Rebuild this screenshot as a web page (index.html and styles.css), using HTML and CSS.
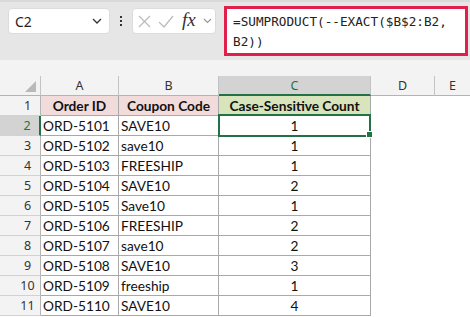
FILE: index.html
```html
<!DOCTYPE html>
<html lang="en">
<head>
  <meta charset="UTF-8">
  <title>Case-Sensitive Count</title>
  <link rel="stylesheet" href="styles.css">
</head>
<body>
  <div class="toolbar">
    <div class="namebox">
      <span class="name">C2</span>
      <svg class="chev" width="10" height="6" viewBox="0 0 10 6"><path d="M1 1 L5 5 L9 1" fill="none" stroke="#333" stroke-width="1.3"/></svg>
    </div>
    <div class="dots"><i></i><i></i><i></i></div>
    <div class="fxbox">
      <svg width="13" height="13" viewBox="0 0 13 13"><path d="M1 1 L12 12 M12 1 L1 12" fill="none" stroke="#bcbcbc" stroke-width="1.3"/></svg>
      <svg class="check" width="16" height="13" viewBox="0 0 16 13"><path d="M1 7 L6 12 L15 1" fill="none" stroke="#bcbcbc" stroke-width="1.3"/></svg>
      <span class="fx">fx</span>
      <svg width="9" height="6" viewBox="0 0 9 6"><path d="M1 1 L4.5 4.5 L8 1" fill="none" stroke="#999" stroke-width="1.2"/></svg>
    </div>
    <div class="formula">=SUMPRODUCT(--EXACT($B$2:B2,<br>B2))</div>
  </div>

  <div class="band"></div>

  <div class="sheet">
    <div class="colhead corner"><span class="tri"></span></div>
    <div class="colhead">A</div>
    <div class="colhead">B</div>
    <div class="colhead active">C</div>
    <div class="colhead">D</div>
    <div class="colhead last">E</div>

    <div class="rowhead">1</div>
    <div class="cell title pink">Order ID</div>
    <div class="cell title pink">Coupon Code</div>
    <div class="cell title green">Case-Sensitive Count</div>
    <div class="empty"></div>
    <div class="empty"></div>

    <div class="rowhead active">2</div>
    <div class="cell">ORD-5101</div>
    <div class="cell">SAVE10</div>
    <div class="cell num selected">1<span class="handle"></span></div>
    <div class="empty"></div>
    <div class="empty"></div>

    <div class="rowhead">3</div>
    <div class="cell">ORD-5102</div>
    <div class="cell">save10</div>
    <div class="cell num">1</div>
    <div class="empty"></div>
    <div class="empty"></div>

    <div class="rowhead">4</div>
    <div class="cell">ORD-5103</div>
    <div class="cell">FREESHIP</div>
    <div class="cell num">1</div>
    <div class="empty"></div>
    <div class="empty"></div>

    <div class="rowhead">5</div>
    <div class="cell">ORD-5104</div>
    <div class="cell">SAVE10</div>
    <div class="cell num">2</div>
    <div class="empty"></div>
    <div class="empty"></div>

    <div class="rowhead">6</div>
    <div class="cell">ORD-5105</div>
    <div class="cell">Save10</div>
    <div class="cell num">1</div>
    <div class="empty"></div>
    <div class="empty"></div>

    <div class="rowhead">7</div>
    <div class="cell">ORD-5106</div>
    <div class="cell">FREESHIP</div>
    <div class="cell num">2</div>
    <div class="empty"></div>
    <div class="empty"></div>

    <div class="rowhead">8</div>
    <div class="cell">ORD-5107</div>
    <div class="cell">save10</div>
    <div class="cell num">2</div>
    <div class="empty"></div>
    <div class="empty"></div>

    <div class="rowhead">9</div>
    <div class="cell">ORD-5108</div>
    <div class="cell">SAVE10</div>
    <div class="cell num">3</div>
    <div class="empty"></div>
    <div class="empty"></div>

    <div class="rowhead">10</div>
    <div class="cell">ORD-5109</div>
    <div class="cell">freeship</div>
    <div class="cell num">1</div>
    <div class="empty"></div>
    <div class="empty"></div>

    <div class="rowhead">11</div>
    <div class="cell">ORD-5110</div>
    <div class="cell">SAVE10</div>
    <div class="cell num">4</div>
    <div class="empty"></div>
    <div class="empty"></div>
  </div>
</body>
</html>
```

FILE: styles.css
```css
body {
  margin: 0;
  background: #fff;
  font-family: Lato, sans-serif;
  overflow: hidden;
}

/* formula bar */
.toolbar {
  height: 60px;
  box-sizing: border-box;
  background: #e6e6e6;
  border-top: 2px solid #dadada;
  padding: 6px 0 0 8px;
  display: flex;
  align-items: flex-start;
}

.namebox {
  width: 102px;
  height: 26px;
  box-sizing: border-box;
  background: #fff;
  border: 1px solid #dcdcdc;
  border-radius: 4px;
  display: flex;
  align-items: center;
  justify-content: space-between;
  padding: 0 7px 0 6px;
}

.name {
  font-family: "Noto Sans", sans-serif;
  font-size: 14px;
  color: #1f1f1f;
}

.dots {
  width: 22px;
  height: 26px;
  display: flex;
  flex-direction: column;
  align-items: center;
  justify-content: center;
  gap: 2px;
}

.dots i {
  width: 2px;
  height: 2px;
  background: #333;
}

.fxbox {
  width: 84px;
  height: 26px;
  box-sizing: border-box;
  background: #fff;
  border: 1px solid #dcdcdc;
  border-radius: 4px;
  display: flex;
  align-items: center;
  padding: 0 0 0 5px;
}

.fxbox .check {
  margin-left: 7px;
}

.fx {
  font-family: "Liberation Serif", serif;
  font-style: italic;
  font-size: 19px;
  color: #333;
  margin: -3px 7px 0 8px;
}

.formula {
  width: 244px;
  height: 50px;
  box-sizing: border-box;
  margin: -2px 0 0 8px;
  background: #fff;
  border: 3px solid #e0204c;
  padding: 3px 0 0 6px;
  font-family: "DejaVu Sans Mono", monospace;
  font-size: 12.7px;
  line-height: 20px;
  color: #222;
  white-space: nowrap;
}

.band {
  height: 16px;
  background: #f3f3f3;
}

/* grid */
.sheet {
  display: grid;
  grid-template-columns: 41px 78px 100px 152px 64px 35px;
  grid-auto-rows: 20px;
  font-size: 13.7px;
  color: #111;
}

.sheet > div {
  box-sizing: border-box;
}

.colhead {
  background: #f3f3f3;
  border-right: 1px solid #c3c3c3;
  border-bottom: 1px solid #b4b4b4;
  font-family: "Noto Sans", sans-serif;
  font-size: 12.5px;
  color: #333;
  text-align: center;
  line-height: 19px;
}

.colhead.last {
  border-right: none;
}

.colhead.active {
  background: #d3d3d3;
  color: #217346;
  border-bottom: 2px solid #217346;
}

.corner {
  position: relative;
}

.tri {
  position: absolute;
  right: 4px;
  bottom: 3px;
  width: 0;
  height: 0;
  border-left: 11px solid transparent;
  border-bottom: 11px solid #b9b9b9;
}

.rowhead {
  background: #f3f3f3;
  border-right: 1px solid #b4b4b4;
  border-bottom: 1px solid #d2d2d2;
  font-family: "Noto Sans", sans-serif;
  font-size: 12.5px;
  color: #333;
  text-align: center;
  padding-left: 15px;
  line-height: 19px;
}

.rowhead.active {
  background: #d3d3d3;
  color: #217346;
  border-right: 2px solid #217346;
}

.cell {
  border-right: 1px solid #a9a9a9;
  border-bottom: 1px solid #a9a9a9;
  padding-left: 2px;
  line-height: 19px;
  white-space: nowrap;
  overflow: hidden;
}

.title {
  font-weight: bold;
  text-align: center;
  padding-left: 0;
}

.pink {
  background: #f2dcdb;
}

.green {
  background: #d8e4bc;
}

.num {
  text-align: center;
  padding-left: 0;
}

.selected {
  position: relative;
  overflow: visible;
}

.selected::before {
  content: "";
  position: absolute;
  left: -1px;
  top: -2px;
  width: 153px;
  height: 23px;
  box-sizing: border-box;
  border: 2px solid #217346;
}

.handle {
  position: absolute;
  left: 147px;
  top: 15px;
  width: 7px;
  height: 7px;
  box-sizing: border-box;
  background: #217346;
  border: 1px solid #fff;
}

.empty {
  background: #fff;
}
```
